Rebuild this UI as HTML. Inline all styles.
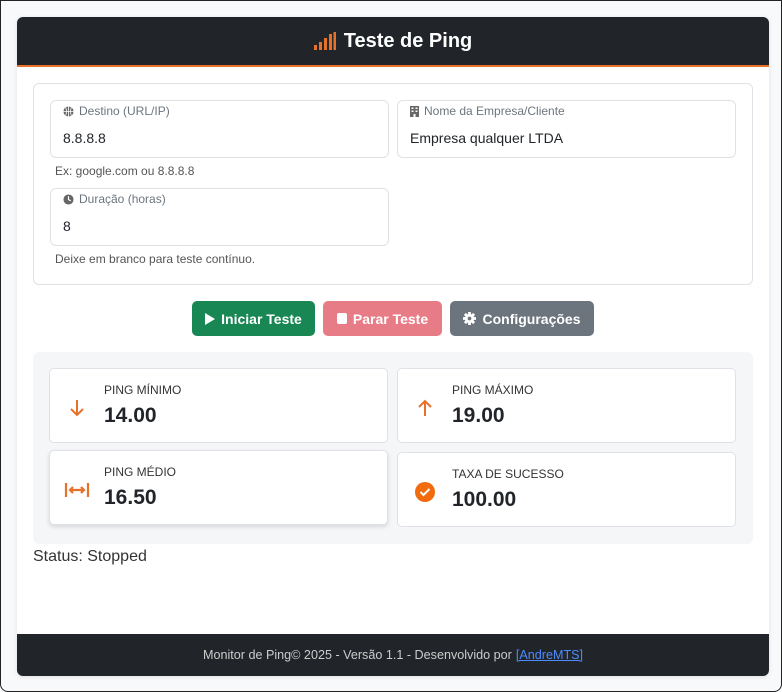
<!DOCTYPE html>
<html><head><meta charset="utf-8"><style>
*{box-sizing:border-box;margin:0;padding:0}
body{width:782px;height:692px;background:#f8f9fa;font-family:"Liberation Sans",sans-serif;position:relative;overflow:hidden;color:#212529}
.frame{position:absolute;left:0;top:0;width:782px;height:692px;border:1px solid #222;border-radius:0 0 8px 8px}
.card{position:absolute;left:17px;top:17px;width:752px;height:659px;background:#fff;border-radius:6px;overflow:hidden;box-shadow:0 1px 4px rgba(0,0,0,.1)}
.hdr{position:absolute;left:0;top:0;width:752px;height:50px;background:#212529;border-bottom:2px solid #e8712a;color:#fff;font-size:20px;font-weight:bold;display:flex;align-items:center;justify-content:center;gap:8px}
.ab{position:absolute}
.fbox{position:absolute;left:16px;top:66px;width:720px;height:202px;border:1px solid #dee2e6;border-radius:6px}
.inp{position:absolute;border:1px solid #dee2e6;border-radius:6px;width:339px;height:58px;background:#fff}
.inp .l{position:absolute;left:12px;top:3px;font-size:12px;color:#6c757d;display:flex;align-items:center;gap:5px}
.inp .v{position:absolute;left:12px;top:29px;font-size:14px}
.help{position:absolute;font-size:12px;color:#555}
.btn{position:absolute;top:284px;height:35px;border-radius:5px;color:#fff;font-size:14px;font-weight:bold;display:flex;align-items:center;justify-content:center;gap:6px}
.stats{position:absolute;left:16px;top:335px;width:720px;height:192px;background:#f5f6f8;border-radius:6px}
.st{position:absolute;width:339px;height:75px;background:#fff;border:1px solid #dee2e6;border-radius:5px}
.st .ic{position:absolute;left:16px;top:28px;width:22px;height:22px}
.st .t{position:absolute;left:54px;top:14px;font-size:12px;color:#333}
.st .n{position:absolute;left:54px;top:35px;font-size:21px;font-weight:bold;color:#212529}
.ftr{position:absolute;left:0;top:617px;width:752px;height:42px;background:#212529;color:#ccc;font-size:12.6px;display:flex;align-items:center;justify-content:center}
.ftr a{color:#4d8cff;text-decoration:underline;margin-left:4px}
</style></head><body>
<div class="frame"></div>
<div class="card">
 <div class="hdr"><svg width="22" height="18" viewBox="0 0 22 18"><g fill="#e8712a"><rect x="0" y="13" width="3" height="5"/><rect x="5" y="10" width="3" height="8"/><rect x="10" y="6" width="3" height="12"/><rect x="15" y="2" width="3" height="16"/><rect x="19.5" y="0" width="2.5" height="18"/></g></svg>Teste de Ping</div>
 <div class="fbox">
  <div class="inp" style="left:16px;top:16px"><div class="l"><svg width="11" height="11" viewBox="0 0 12 12"><circle cx="6" cy="6" r="5.5" fill="#666"/><path d="M0.5 6h11M6 0.5v11M3 1.5q1.5 4.5 0 9M9 1.5q-1.5 4.5 0 9" stroke="#fff" stroke-width="0.9" fill="none"/></svg>Destino (URL/IP)</div><div class="v">8.8.8.8</div></div>
  <div class="inp" style="left:363px;top:16px"><div class="l"><svg width="9" height="11" viewBox="0 0 9 11"><rect width="9" height="11" fill="#666"/><g fill="#fff"><rect x="1.5" y="1.5" width="2" height="1.5"/><rect x="5.5" y="1.5" width="2" height="1.5"/><rect x="1.5" y="4.5" width="2" height="1.5"/><rect x="5.5" y="4.5" width="2" height="1.5"/><rect x="3.5" y="8" width="2" height="3"/></g></svg>Nome da Empresa/Cliente</div><div class="v">Empresa qualquer LTDA</div></div>
  <div class="help" style="left:21px;top:80px">Ex: google.com ou 8.8.8.8</div>
  <div class="inp" style="left:16px;top:104px"><div class="l"><svg width="11" height="11" viewBox="0 0 12 12"><circle cx="6" cy="6" r="5.5" fill="#666"/><path d="M6 2.5V6l2.5 1.5" stroke="#fff" stroke-width="1.3" fill="none"/></svg>Duração (horas)</div><div class="v">8</div></div>
  <div class="help" style="left:21px;top:168px">Deixe em branco para teste contínuo.</div>
 </div>
 <div class="btn" style="left:175px;width:123px;background:#198754"><svg width="10" height="12"><path d="M0 0L10 6L0 12Z" fill="#fff"/></svg>Iniciar Teste</div>
 <div class="btn" style="left:306px;width:119px;background:#e87c86"><svg width="10" height="11"><rect width="10" height="11" rx="2" fill="#fff"/></svg>Parar Teste</div>
 <div class="btn" style="left:433px;width:144px;background:#6c757d"><svg width="13" height="13" viewBox="0 0 14 14"><g fill="#fff"><circle cx="7" cy="7" r="5"/><rect x="5.5" y="0" width="3" height="14"/><rect x="0" y="5.5" width="14" height="3"/><rect x="5.5" y="0" width="3" height="14" transform="rotate(45 7 7)"/><rect x="5.5" y="0" width="3" height="14" transform="rotate(-45 7 7)"/></g><circle cx="7" cy="7" r="2" fill="#6c757d"/></svg>Configurações</div>
 <div class="stats">
  <div class="st" style="left:16px;top:16px"><svg class="ic" viewBox="0 0 22 22"><path d="M11 3v15M5 12l6 6 6-6" stroke="#e8712a" stroke-width="2" fill="none"/></svg><div class="t">PING MÍNIMO</div><div class="n">14.00</div></div>
  <div class="st" style="left:364px;top:16px"><svg class="ic" viewBox="0 0 22 22"><path d="M11 19V4M5 10l6-6 6 6" stroke="#e8712a" stroke-width="2" fill="none"/></svg><div class="t">PING MÁXIMO</div><div class="n">19.00</div></div>
  <div class="st" style="left:16px;top:98px;box-shadow:0 2px 4px rgba(0,0,0,.12)"><svg class="ic" style="left:14px;width:26px" viewBox="0 0 26 22"><path d="M2 4v14M24 4v14M6 11h14M9 8l-3 3 3 3M17 8l3 3-3 3" stroke="#e8712a" stroke-width="2.2" fill="none"/></svg><div class="t">PING MÉDIO</div><div class="n">16.50</div></div>
  <div class="st" style="left:364px;top:100px"><svg class="ic" viewBox="0 0 22 22"><circle cx="11" cy="11" r="10" fill="#f26b0f"/><path d="M6.5 11l3 3 6-6" stroke="#fff" stroke-width="2" fill="none"/></svg><div class="t">TAXA DE SUCESSO</div><div class="n">100.00</div></div>
 </div>
 <div class="ab" style="left:16px;top:531px;font-size:16px;color:#333">Status: Stopped</div>
 <div class="ftr">Monitor de Ping© 2025 - Versão 1.1 - Desenvolvido por <a>[AndreMTS]</a></div>
</div>
</body></html>
